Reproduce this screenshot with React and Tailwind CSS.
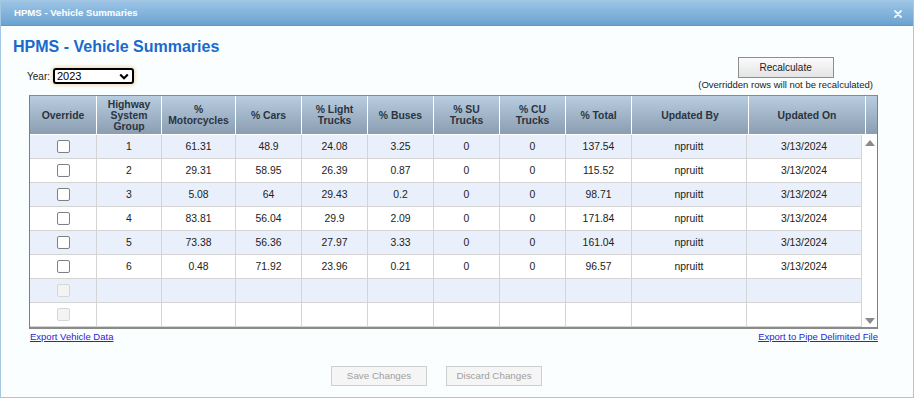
import React from 'react';

const ROWS = [
  { g: 1, mc: '61.31', cars: '48.9', lt: '24.08', bus: '3.25', su: '0', cu: '0', tot: '137.54', by: 'npruitt', on: '3/13/2024' },
  { g: 2, mc: '29.31', cars: '58.95', lt: '26.39', bus: '0.87', su: '0', cu: '0', tot: '115.52', by: 'npruitt', on: '3/13/2024' },
  { g: 3, mc: '5.08', cars: '64', lt: '29.43', bus: '0.2', su: '0', cu: '0', tot: '98.71', by: 'npruitt', on: '3/13/2024' },
  { g: 4, mc: '83.81', cars: '56.04', lt: '29.9', bus: '2.09', su: '0', cu: '0', tot: '171.84', by: 'npruitt', on: '3/13/2024' },
  { g: 5, mc: '73.38', cars: '56.36', lt: '27.97', bus: '3.33', su: '0', cu: '0', tot: '161.04', by: 'npruitt', on: '3/13/2024' },
  { g: 6, mc: '0.48', cars: '71.92', lt: '23.96', bus: '0.21', su: '0', cu: '0', tot: '96.57', by: 'npruitt', on: '3/13/2024' },
  null,
  null,
];

// header widths (px) incl. 1px separators
const HEAD = [
  ['Override', 67],
  ['Highway System Group', 65],
  ['% Motorcycles', 74],
  ['% Cars', 66],
  ['% Light Trucks', 66],
  ['% Buses', 66],
  ['% SU Trucks', 66],
  ['% CU Trucks', 66],
  ['% Total', 66],
  ['Updated By', 117],
  ['Updated On', 117],
];
const BODY_W = [67, 65, 74, 66, 66, 66, 66, 66, 66, 115, 115];
const KEYS = ['g', 'mc', 'cars', 'lt', 'bus', 'su', 'cu', 'tot', 'by', 'on'];

function Checkbox({ disabled }) {
  return (
    <span
      className={
        disabled
          ? 'inline-block h-[13px] w-[13px] rounded-[2px] border border-[#d6d6d6] bg-[#f3f3f3]'
          : 'inline-block h-[13px] w-[13px] rounded-[2px] border border-[#808080] bg-white'
      }
    />
  );
}

export default function App() {
  return (
    <div className="h-[398px] w-[914px] overflow-hidden bg-white font-['Liberation_Sans',Arial,sans-serif]">
      <div className="flex h-[398px] w-[914px] flex-col border border-[#a4c7e4] bg-[#fbfefe]">
        {/* title bar */}
        <div className="flex h-[25px] shrink-0 items-center justify-between border-b border-[#5f98c9] bg-gradient-to-b from-[#9cc5e6] to-[#6ba2d0] pl-[13px] pr-[11px]">
          <span className="text-[9.6px] font-bold text-white">HPMS - Vehicle Summaries</span>
          <svg width="8" height="8" viewBox="0 0 8 8" className="mt-[1px]">
            <path d="M1 1 L7 7 M7 1 L1 7" stroke="#eef4fa" strokeWidth="1.9" strokeLinecap="round" />
          </svg>
        </div>

        {/* heading */}
        <h1 className="ml-[12px] mt-[11px] h-[20px] text-[16px] font-bold leading-[20px] text-[#1a69cc]">
          HPMS - Vehicle Summaries
        </h1>

        {/* controls */}
        <div className="flex h-[38px] items-start justify-between">
          <div className="ml-[26px] mt-[11px] flex items-center gap-[3px]">
            <span className="text-[10px] text-[#222]">Year:</span>
            <div className="flex h-[16px] w-[81px] items-center justify-between rounded-[3px] border-2 border-black bg-white pl-[2px] pr-[3px] shadow-[0_0_3px_2px_#f2e4cc]">
              <span className="text-[11px] leading-none text-black">2023</span>
              <svg width="10" height="7" viewBox="0 0 10 7">
                <path d="M1.2 1.5 L5 5.2 L8.8 1.5" stroke="#000" strokeWidth="2.2" fill="none" />
              </svg>
            </div>
          </div>
          <div className="mr-[40px] flex flex-col items-center">
            <button className="h-[21px] w-[96px] border border-[#8d8d8d] bg-gradient-to-b from-[#fbfbfb] to-[#e4e4e4] text-[10px] text-[#222]">
              Recalculate
            </button>
            <span className="mt-[1px] text-[9.5px] leading-[11px] text-[#222]">
              (Overridden rows will not be recalculated)
            </span>
          </div>
        </div>

        {/* grid */}
        <div className="ml-[28px] w-[849px] border-x border-t border-b-2 border-x-[#7f7f7f] border-t-[#8a8a8a] border-b-[#8a8a8a]">
          <div className="flex h-[39px] bg-gradient-to-b from-[#b9cde0] to-[#8a9db0]">
            {HEAD.map(([t, w]) => (
              <div
                key={t}
                style={{ width: w }}
                className="flex shrink-0 items-center justify-center border-b border-r border-white px-[4px] text-center text-[10.4px] font-bold leading-[11px] text-[#2b3440]"
              >
                {t}
              </div>
            ))}
            <div className="flex-1 border-b border-white" />
          </div>
          <div className="flex">
            <div className="flex flex-col">
              {ROWS.map((r, i) => (
                <div key={i} className={`flex h-[24px] ${i % 2 === 0 ? 'bg-[#e9f0fb]' : 'bg-white'}`}>
                  {BODY_W.map((w, c) => (
                    <div
                      key={c}
                      style={{ width: w }}
                      className="flex shrink-0 items-center justify-center border-b border-r border-[#d4d4d4] text-[10.4px] text-[#222]"
                    >
                      {c === 0 ? <Checkbox disabled={!r} /> : r ? r[KEYS[c - 1]] : ''}
                    </div>
                  ))}
                </div>
              ))}
            </div>
            <div className="flex flex-1 flex-col items-center justify-between bg-white pb-[3px] pt-[5px]">
              <svg width="10" height="6" viewBox="0 0 10 6">
                <path d="M0 6 L5 0 L10 6 Z" fill="#8a8a8a" />
              </svg>
              <svg width="10" height="6" viewBox="0 0 10 6">
                <path d="M0 0 L5 6 L10 0 Z" fill="#8a8a8a" />
              </svg>
            </div>
          </div>
        </div>

        {/* links */}
        <div className="ml-[29px] mt-[2px] flex w-[848px] justify-between text-[9.5px] leading-[12px]">
          <a href="#" className="text-[#2f22d6] underline">Export Vehicle Data</a>
          <a href="#" className="text-[#2f22d6] underline">Export to Pipe Delimited File</a>
        </div>

        {/* footer buttons */}
        <div className="ml-[330px] mt-[23px] flex gap-[19px]">
          <button disabled className="h-[20px] w-[96px] border border-[#cfcfcf] bg-[#f5f5f5] text-[9.8px] text-[#a0a0a0]">
            Save Changes
          </button>
          <button disabled className="h-[20px] w-[96px] border border-[#cfcfcf] bg-[#f5f5f5] text-[9.8px] text-[#a0a0a0]">
            Discard Changes
          </button>
        </div>
      </div>
    </div>
  );
}
